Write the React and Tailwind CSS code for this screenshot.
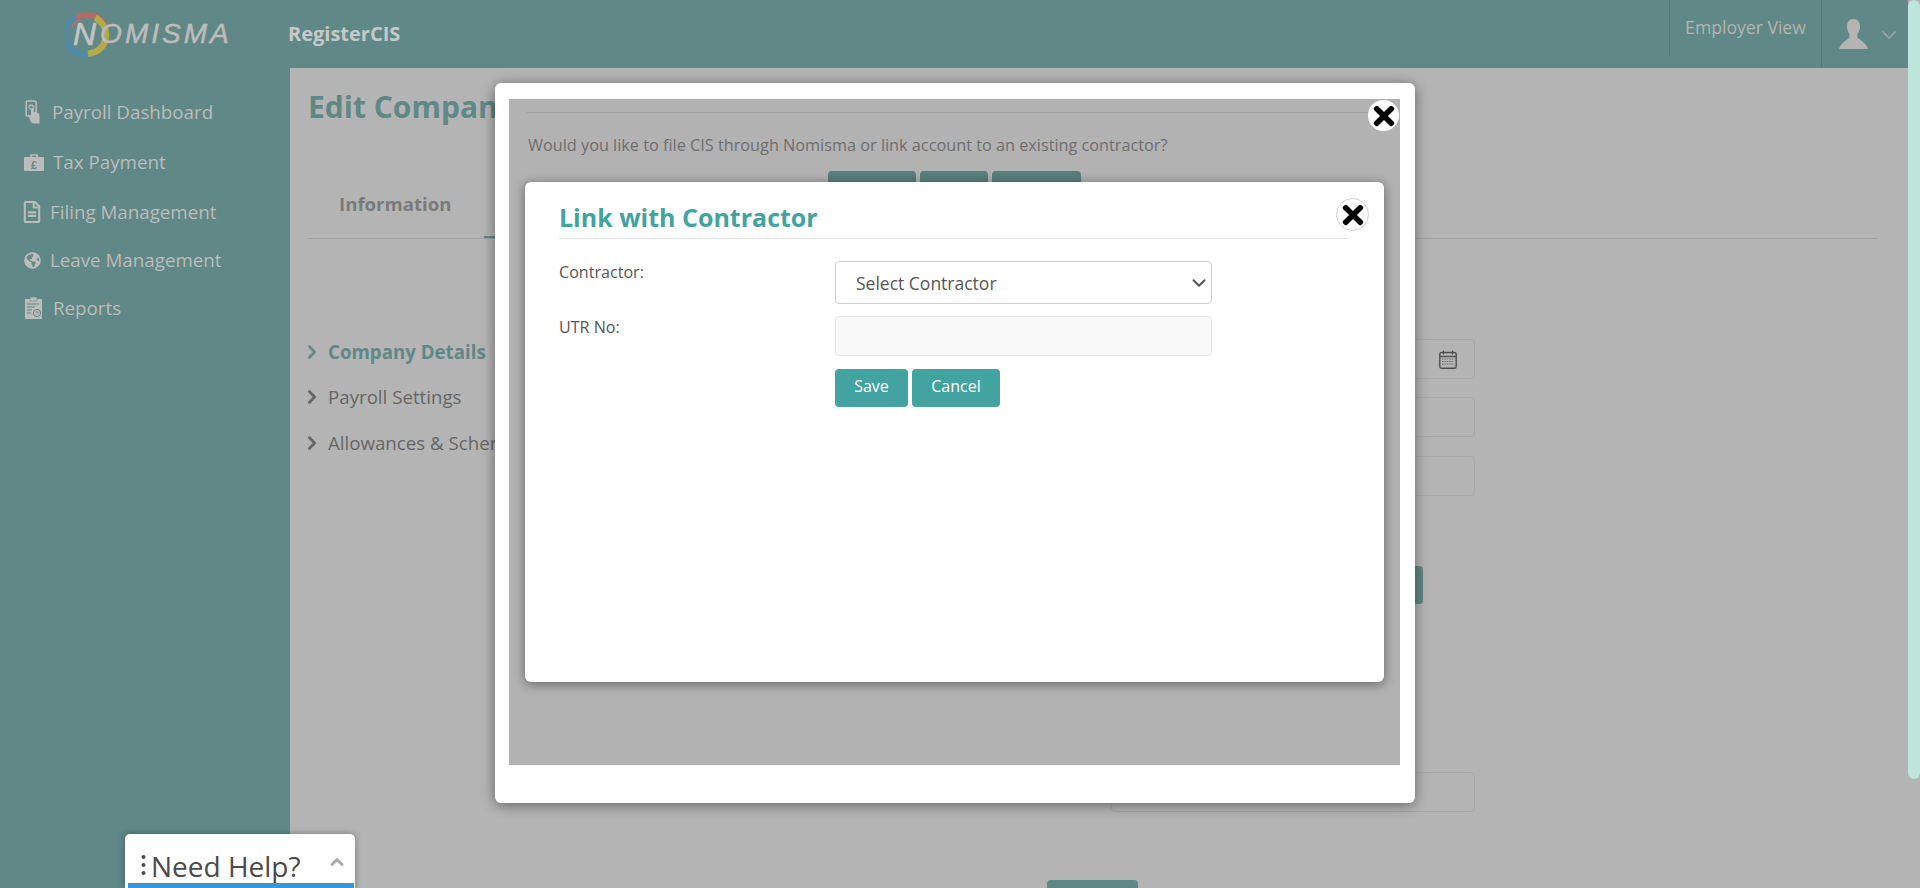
import React from 'react';
import { FaTimes, FaGlobeAmericas, FaRegFileAlt } from 'react-icons/fa';
import { ChevronRight, ChevronDown, ChevronUp } from 'lucide-react';

function NoteIcon() {
  return (
    <svg width="16" height="24" viewBox="0 0 16 24" fill="none">
      <rect x="1.2" y="1" width="10" height="15" rx="1" stroke="#bcbcbc" strokeWidth="1.6" />
      <circle cx="6.2" cy="7" r="2.2" stroke="#bcbcbc" strokeWidth="1.2" />
      <path d="M6 12 L6 17 L3 14 L5 20 Q6 23.5 9 23.5 L14.5 23.5 L14.5 15 Q14.5 13 12 12.5 L9 12 L9 9 Q7.5 7.5 6 9 Z" fill="#bcbcbc" />
    </svg>
  );
}

function CaseIcon() {
  return (
    <svg width="20" height="17" viewBox="0 0 20 17">
      <path d="M7 3V1h6v2" fill="none" stroke="#bcbcbc" strokeWidth="1.6" />
      <rect x="0" y="3" width="20" height="14" rx="1" fill="#bcbcbc" />
      <text x="10" y="14.5" textAnchor="middle" fontSize="11" fontWeight="700" fontFamily="Liberation Sans, sans-serif" fill="#5f8886">£</text>
    </svg>
  );
}

function ClipIcon() {
  return (
    <svg width="17" height="22" viewBox="0 0 17 22">
      <rect x="0" y="2" width="17" height="20" fill="#bcbcbc" />
      <rect x="5" y="0" width="7" height="4" rx="1" fill="#bcbcbc" stroke="#5f8886" strokeWidth="0.6" />
      <path d="M2 7h12M2 10h8M2 13h5M2 16h4" stroke="#5f8886" strokeWidth="1" />
      <circle cx="12" cy="16" r="3.6" fill="#bcbcbc" stroke="#5f8886" strokeWidth="1" />
      <path d="M12 14v2h2" stroke="#5f8886" strokeWidth="0.8" fill="none" />
    </svg>
  );
}

function UserIcon() {
  return (
    <svg width="29" height="30" viewBox="0 0 29 30">
      <path
        d="M14.5 0C10 0 8 3 8 7.5c0 3 1 5.500 2.500 7.500v3C10 20.500 2 23 0 30h29c-2-7-10-9.500-10.500-12v-3C20 13 21 10.500 21 7.500 21 3 19 0 14.500 0z"
        fill="#b4b4b4"
      />
    </svg>
  );
}

function CalendarIcon() {
  return (
    <svg width="18" height="19" viewBox="0 0 18 19" fill="none">
      <rect x="0.8" y="2.500" width="16.400" height="15.700" rx="1.500" stroke="#4f4f4f" strokeWidth="1.400" />
      <path d="M1 6.500h16" stroke="#4f4f4f" strokeWidth="1.400" />
      <path d="M4.500 0.500v4M13.500 0.500v4" stroke="#4f4f4f" strokeWidth="1.200" />
      <path d="M3 9h12M3 11.500h12M3 14h12" stroke="#6c6c6c" strokeWidth="1.200" strokeDasharray="1.400 1" />
    </svg>
  );
}

function LogoRing() {
  return (
    <svg width="46" height="46" viewBox="0 0 44 44" fill="none" className="shrink-0">
      <path d="M5 15 A 18.500 18.500 0 0 1 38 13" stroke="#ac6d6b" strokeWidth="6" />
      <path d="M10 6 A 19 19 0 0 0 24 41" stroke="#4f8aa6" strokeWidth="6" />
      <path d="M29 6 Q 41 14 39 26 Q 36 39 22 41" stroke="#b6a948" strokeWidth="6" />
    </svg>
  );
}

const navItems = [
  { label: 'Payroll Dashboard', icon: <NoteIcon />, cls: 'pl-[25px] gap-[11px] h-[50px]' },
  { label: 'Tax Payment', icon: <CaseIcon />, cls: 'pl-[24px] gap-[9px] h-[50px]' },
  { label: 'Filing Management', icon: <FaRegFileAlt size={22} />, cls: 'pl-[21px] gap-[7px] h-[50px]' },
  { label: 'Leave Management', icon: <FaGlobeAmericas size={17} />, cls: 'pl-[24px] gap-[9px] h-[47px]' },
  { label: 'Reports', icon: <ClipIcon />, cls: 'pl-[25px] gap-[11px] h-[48px]' },
];

function CloseButton({ className }) {
  return (
    <button className={`absolute flex items-center justify-center rounded-full bg-white ${className}`}>
      <FaTimes size={30} color="#000" />
    </button>
  );
}

function TopBar() {
  return (
    <header className="flex h-[68px] items-stretch bg-[#5f8886] shrink-0">
      <div className="flex w-[288px] items-center pl-[65px]">
        <LogoRing />
        <span className="ml-[-38px] font-['Liberation_Sans',sans-serif] text-[32px] italic leading-none text-[#c4c4c4] [-webkit-text-stroke:0.6px_#c4c4c4]">N</span>
        <span className="ml-[4px] font-['Liberation_Sans',sans-serif] text-[28px] italic leading-none tracking-[3px] text-[#bcbcbc] [-webkit-text-stroke:0.5px_#bcbcbc]">OMISMA</span>
      </div>
      <div className="flex flex-1 items-center text-[20px] font-bold text-[#c8c8c8]">RegisterCIS</div>
      <div className="mb-[12px] flex w-[152px] items-start justify-center border-l border-[#557a78] pt-[14px] text-[17.600px] text-[#b4b4b4]">
        Employer View
      </div>
      <div className="flex w-[87px] items-center border-l border-[#557a78] pl-[17px]">
        <UserIcon />
        <ChevronDown size={24} color="#8fa5a3" strokeWidth={1.800} className="ml-[9px] mt-[2px]" />
      </div>
    </header>
  );
}

function SideBar() {
  return (
    <aside className="w-[290px] shrink-0 bg-[#5f8886] pt-[19px] text-[18.750px] text-[#bcbcbc]">
      {navItems.map((item) => (
        <div key={item.label} className={`flex items-center ${item.cls}`}>
          {item.icon}
          <span>{item.label}</span>
        </div>
      ))}
    </aside>
  );
}

function FormInput({ children }) {
  return (
    <div className="flex h-[40px] items-center justify-end rounded-[4px] border border-[#a8a8a8] pr-[17px]">
      {children}
    </div>
  );
}

function PageBody() {
  return (
    <main className="min-w-0 flex-1 overflow-hidden pl-[18px] pr-[31px] pt-[19px]">
      <h1 className="whitespace-nowrap text-[30px] font-bold leading-[40px] text-[#5f8886]">Edit Company Details</h1>
      <div className="mt-[45px] flex h-[67px] border-b border-[#a2a2a2]">
        <div className="w-[176px] pl-[31px] pt-[18px] text-[18.600px] font-bold text-[#7b7b7b]">Information</div>
        <div className="h-[66px] w-[120px] border-b-2 border-[#5f8886]" />
      </div>
      <div className="flex">
        <div className="w-[803px] pt-[99px] text-[18.700px] leading-[27px] text-[#666]">
          <div className="mb-[18px] flex items-center font-bold text-[#5f8886]">
            <ChevronRight size={22} strokeWidth={2.800} className="-ml-[7px] mr-[5px]" />Company Details
          </div>
          <div className="mb-[19px] flex items-center">
            <ChevronRight size={22} strokeWidth={2.800} className="-ml-[7px] mr-[5px]" />Payroll Settings
          </div>
          <div className="flex items-center">
            <ChevronRight size={22} strokeWidth={2.800} className="-ml-[7px] mr-[5px]" />Allowances &amp; Schemes
          </div>
        </div>
        <div className="flex w-[364px] flex-col pt-[100px]">
          <FormInput><CalendarIcon /></FormInput>
          <div className="mt-[18px]"><FormInput /></div>
          <div className="mt-[19px]"><FormInput /></div>
          <div className="ml-[189px] mt-[70px] h-[38px] w-[123px] rounded-[4px] bg-[#5f8886]" />
          <div className="mt-[168px]"><FormInput /></div>
        </div>
      </div>
      <div className="ml-[739px] mt-[68px] h-[40px] w-[91px] rounded-[4px] bg-[#5f8886]" />
    </main>
  );
}

function LinkContractorModal() {
  return (
    <div className="absolute left-[30px] top-[99px] h-[500px] w-[859px] rounded-[6px] bg-white px-[34px] pt-[19px] shadow-[0_2px_12px_rgba(0,0,0,0.45)]">
      <h2 className="mr-[1px] border-b border-[#e5e5e5] pb-[5px] text-[25px] font-bold leading-[32px] text-[#42a3a1]">Link with Contractor</h2>
      <div className="mt-[22px] flex items-start">
        <label className="w-[276px] text-[16.100px] leading-[22px] text-[#555]">Contractor:</label>
        <div className="relative">
          <select className="h-[43px] w-[377px] appearance-none rounded-[4px] border border-[#cfcfcf] bg-white pb-[0px] pl-[20px] pt-[2px] text-[17.500px] text-[#555]">
            <option>Select Contractor</option>
          </select>
          <ChevronDown size={22} strokeWidth={2.200} color="#555" className="pointer-events-none absolute right-[2px] top-[11px]" />
        </div>
      </div>
      <div className="mt-[12px] flex items-start">
        <label className="w-[276px] text-[16.100px] leading-[22px] text-[#555]">UTR No:</label>
        <input readOnly className="h-[40px] w-[377px] rounded-[4px] border border-[#e5e5e5] bg-[#f9f9f9]" />
      </div>
      <div className="ml-[276px] mt-[13px] flex gap-[4px]">
        <button className="h-[38px] w-[73px] rounded-[4px] bg-[#42a3a1] pb-[4px] text-[16px] text-white">Save</button>
        <button className="h-[38px] w-[88px] rounded-[4px] bg-[#42a3a1] pb-[4px] text-[16px] text-white">Cancel</button>
      </div>
      <CloseButton className="right-[15px] top-[16px] h-[33px] w-[33px] border border-[#d0d0d0]" />
    </div>
  );
}

function OuterModal() {
  return (
    <div className="absolute left-[495px] top-[83px] h-[720px] w-[920px] rounded-[6px] bg-white pb-[38px] pl-[14px] pr-[15px] pt-[16px] shadow-[0_2px_14px_rgba(0,0,0,0.45)]">
      <div className="h-full overflow-hidden bg-[#b2b2b2] px-[18px] pt-[13px]">
        <div className="border-t border-[#a0a0a0] pl-[1px] pt-[21px] text-[16.250px] leading-[22px] text-[#6e6e6e]">
          Would you like to file CIS through Nomisma or link account to an existing contractor?
        </div>
        <div className="ml-[301px] mt-[15px] flex gap-[4px]">
          <div className="h-[38px] w-[88px] rounded-[4px] bg-[#5a7f7d]" />
          <div className="h-[38px] w-[68px] rounded-[4px] bg-[#5a7f7d]" />
          <div className="h-[38px] w-[89px] rounded-[4px] bg-[#5a7f7d]" />
        </div>
      </div>
      <LinkContractorModal />
      <CloseButton className="left-[873px] top-[17px] h-[31px] w-[31px]" />
    </div>
  );
}

function HelpWidget() {
  return (
    <div className="absolute bottom-0 left-[125px] flex h-[54px] w-[230px] items-start rounded-t-[5px] bg-white pl-[16px] pt-[13px] shadow-[0_0_6px_rgba(0,0,0,0.35)]">
      <svg width="5" height="22" viewBox="0 0 5 22" className="mt-[7px] shrink-0">
        <circle cx="2.500" cy="3" r="2" fill="#4a4a4a" />
        <circle cx="2.500" cy="11" r="2" fill="#4a4a4a" />
        <circle cx="2.500" cy="19" r="2" fill="#4a4a4a" />
      </svg>
      <span className="ml-[5px] text-[28px] leading-[38px] text-[#4a4a4a]">Need Help?</span>
      <ChevronUp size={20} strokeWidth={3.500} color="#aaaaaa" className="ml-[26px] mt-[5px]" />
      <div className="absolute bottom-0 left-[3px] right-[1px] h-[5px] bg-[#3498db]" />
    </div>
  );
}

export default function App() {
  return (
    <div className="relative flex h-screen overflow-hidden bg-[#b4b4b4] font-['Open_Sans',sans-serif]">
      <div className="flex min-w-0 flex-1 flex-col">
        <TopBar />
        <div className="flex min-h-0 flex-1">
          <SideBar />
          <PageBody />
        </div>
      </div>
      <div className="w-[12px] shrink-0">
        <div className="h-[779px] rounded-[6px] bg-[#bde5d9]" />
      </div>
      <OuterModal />
      <HelpWidget />
    </div>
  );
}
